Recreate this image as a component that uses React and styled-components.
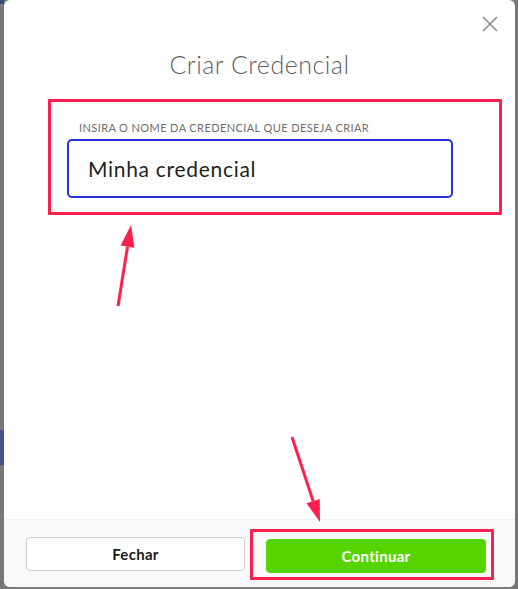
import React, { useState } from 'react';
import styled, { createGlobalStyle } from 'styled-components';

const GlobalStyle = createGlobalStyle`
  html, body {
    margin: 0;
    padding: 0;
    background: #7a7a7a;
  }
  * {
    box-sizing: border-box;
  }
`;

const Page = styled.div`
  display: flex;
  width: 518px;
  height: 589px;
  overflow: hidden;
  font-family: 'Lato', 'Noto Sans', sans-serif;
`;

const Strip = styled.div`
  width: ${props => props.width}px;
  flex-shrink: 0;
  display: flex;
  flex-direction: column;
  background: #777777;
`;

const StripBlock = styled.div`
  height: ${props => props.height}px;
  background: ${props => props.color || 'transparent'};
`;

const Modal = styled.div`
  position: relative;
  width: 511px;
  height: 587px;
  flex-shrink: 0;
  background: #ffffff;
  border-radius: 6px;
  display: flex;
  flex-direction: column;
  overflow: hidden;
`;

const Body = styled.div`
  flex: 1;
  display: flex;
  flex-direction: column;
`;

const HeaderRow = styled.div`
  display: flex;
  justify-content: flex-end;
  padding: 15px 16px 0 0;
`;

const CloseButton = styled.button`
  width: 18px;
  height: 18px;
  padding: 0;
  border: none;
  background: none;
  cursor: pointer;
  display: flex;
  align-items: center;
  justify-content: center;
`;

const Title = styled.h2`
  margin: 16px 0 0;
  text-align: center;
  font-size: 25px;
  font-weight: 300;
  color: #5f5f5f;
  letter-spacing: 0.5px;
`;

const HighlightBox = styled.div`
  border: 3px solid #ff1f4f;
  border-radius: 1px;
`;

const FieldBox = styled(HighlightBox)`
  margin: 20px 13px 0 44px;
  padding: 19px 16px 14px;
  display: flex;
  flex-direction: column;
`;

const Label = styled.label`
  font-size: 11px;
  color: #6f6f6f;
  letter-spacing: 0.4px;
  padding-left: 12px;
  margin-bottom: 5px;
  line-height: 13px;
`;

const Input = styled.input`
  width: 386px;
  height: 59px;
  padding: 0 19px;
  border: 2px solid #2433d6;
  border-radius: 5px;
  font-family: inherit;
  font-size: 21px;
  font-weight: 400;
  letter-spacing: 0.7px;
  color: #1f1f1f;
  caret-color: #222;
  outline: none;
  background: #fff;
`;

const Footer = styled.div`
  height: 68px;
  background: #f8f9fb;
  border-top: 1px solid #eef0f3;
  display: flex;
  align-items: center;
  padding: 0 21px 0 22px;
  gap: 5px;
`;

const Button = styled.button`
  height: 34px;
  width: ${props => props.width}px;
  border-radius: 4px;
  font-family: inherit;
  font-size: 15px;
  font-weight: 700;
  letter-spacing: 0.3px;
  cursor: pointer;
  background: ${props => props.primary ? '#55d400' : '#ffffff'};
  color: ${props => props.primary ? '#ffffff' : '#1c1c1c'};
  border: 1px solid ${props => props.primary ? '#55d400' : '#cfcfcf'};
`;

const ButtonBox = styled(HighlightBox)`
  padding: 7px 5px 4px 13px;
  margin-top: 1px;
`;

const Annotations = styled.svg`
  position: absolute;
  inset: 0;
  pointer-events: none;
`;

function Arrow({ x1, y1, x2, y2 }) {
  const angle = Math.atan2(y2 - y1, x2 - x1);
  const len = 22;
  const half = 7;
  const bx = x2 - len * Math.cos(angle);
  const by = y2 - len * Math.sin(angle);
  const px = -Math.sin(angle) * half;
  const py = Math.cos(angle) * half;
  return (
    <g fill="#ff1f4f" stroke="#ff1f4f">
      <line x1={x1} y1={y1} x2={bx} y2={by} strokeWidth="3" />
      <polygon
        points={`${x2},${y2} ${bx + px},${by + py} ${bx - px},${by - py}`}
        stroke="none"
      />
    </g>
  );
}

export default function App() {
  const [name, setName] = useState('Minha credencial');

  return (
    <Page>
      <GlobalStyle />
      <Strip width={4}>
        <StripBlock height={4} color="#3f4a78" />
        <StripBlock height={426} />
        <StripBlock height={35} color="#4a4f86" />
      </Strip>
      <Modal>
        <Body>
          <HeaderRow>
            <CloseButton aria-label="Fechar">
              <svg width="16" height="16" viewBox="0 0 16 16">
                <path d="M1 1L15 15M15 1L1 15" stroke="#8c8c8c" strokeWidth="1.6" />
              </svg>
            </CloseButton>
          </HeaderRow>
          <Title>Criar Credencial</Title>
          <FieldBox>
            <Label>INSIRA O NOME DA CREDENCIAL QUE DESEJA CRIAR</Label>
            <Input value={name} onChange={e => setName(e.target.value)} autoFocus />
          </FieldBox>
        </Body>
        <Footer>
          <Button width={219}>Fechar</Button>
          <ButtonBox>
            <Button primary width={220}>Continuar</Button>
          </ButtonBox>
        </Footer>
        <Annotations width="511" height="587">
          <Arrow x1={114} y1={306} x2={127} y2={225} />
          <Arrow x1={288} y1={437} x2={316} y2={522} />
        </Annotations>
      </Modal>
      <Strip width={3} />
    </Page>
  );
}
